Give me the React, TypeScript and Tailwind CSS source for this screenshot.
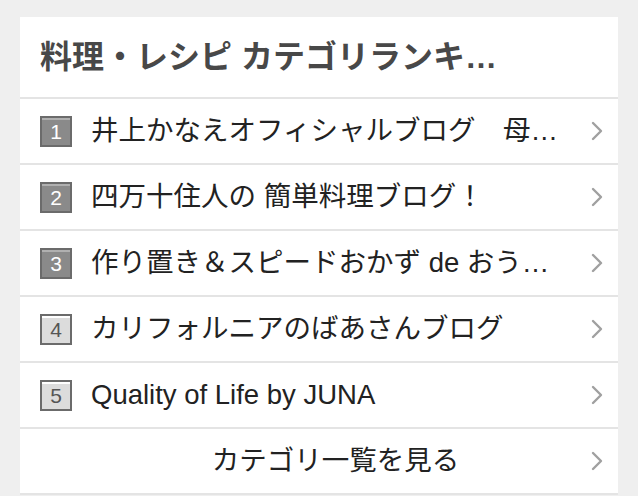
const ranking = [
  { rank: 1, title: "井上かなえオフィシャルブログ　母…", top: true },
  { rank: 2, title: "四万十住人の 簡単料理ブログ！", top: true },
  { rank: 3, title: "作り置き＆スピードおかず de おう…", top: true },
  { rank: 4, title: "カリフォルニアのばあさんブログ", top: false },
  { rank: 5, title: "Quality of Life by JUNA", top: false },
];

function Chevron() {
  return (
    <svg width="12" height="20" viewBox="0 0 12 20" className="shrink-0">
      <path
        d="M2 2 L10 10 L2 18"
        fill="none"
        stroke="#a0a0a0"
        strokeWidth="2.4"
        strokeLinecap="round"
        strokeLinejoin="round"
      />
    </svg>
  );
}

function RankBadge({ rank, top }: { rank: number; top: boolean }) {
  return (
    <div
      className={
        top
          ? "flex h-[31px] w-[32px] shrink-0 items-center justify-center border-2 border-[#6b6b6b] bg-[#8a8a8a] text-[21px] leading-none text-white shadow-[inset_0_2px_0_#b0b0b0]"
          : "flex h-[31px] w-[32px] shrink-0 items-center justify-center border-2 border-[#6b6b6b] bg-[#dcdcdc] text-[21px] leading-none text-[#555] shadow-[inset_0_2px_0_#ffffff]"
      }
    >
      {rank}
    </div>
  );
}

export default function App() {
  return (
    <div
      className="min-h-[496px] bg-[#efefef] px-[20px] pt-[17px]"
      style={{ fontFamily: '"Liberation Sans", "Noto Sans CJK JP", sans-serif' }}
    >
      <div className="bg-white">
        <div className="flex h-[82px] items-center border-b-2 border-[#e4e4e4] pl-[20px]">
          <h3 className="whitespace-nowrap text-[32px] font-bold leading-none text-[#484848]">
            料理・レシピ カテゴリランキ…
          </h3>
        </div>
        {ranking.map((item) => (
          <div
            key={item.rank}
            className="flex h-[66px] items-center border-b-2 border-[#e4e4e4] pl-[20px] pr-[15px]"
          >
            <RankBadge rank={item.rank} top={item.top} />
            <span className="ml-[19px] flex-1 whitespace-nowrap text-[27.5px] leading-none text-[#222]">
              {item.title}
            </span>
            <Chevron />
          </div>
        ))}
        <div className="flex h-[66px] items-center border-b-2 border-[#e4e4e4] pl-[60px] pr-[15px]">
          <span className="flex-1 whitespace-nowrap text-center text-[27.5px] leading-none text-[#222]">
            カテゴリ一覧を見る
          </span>
          <Chevron />
        </div>
      </div>
    </div>
  );
}
